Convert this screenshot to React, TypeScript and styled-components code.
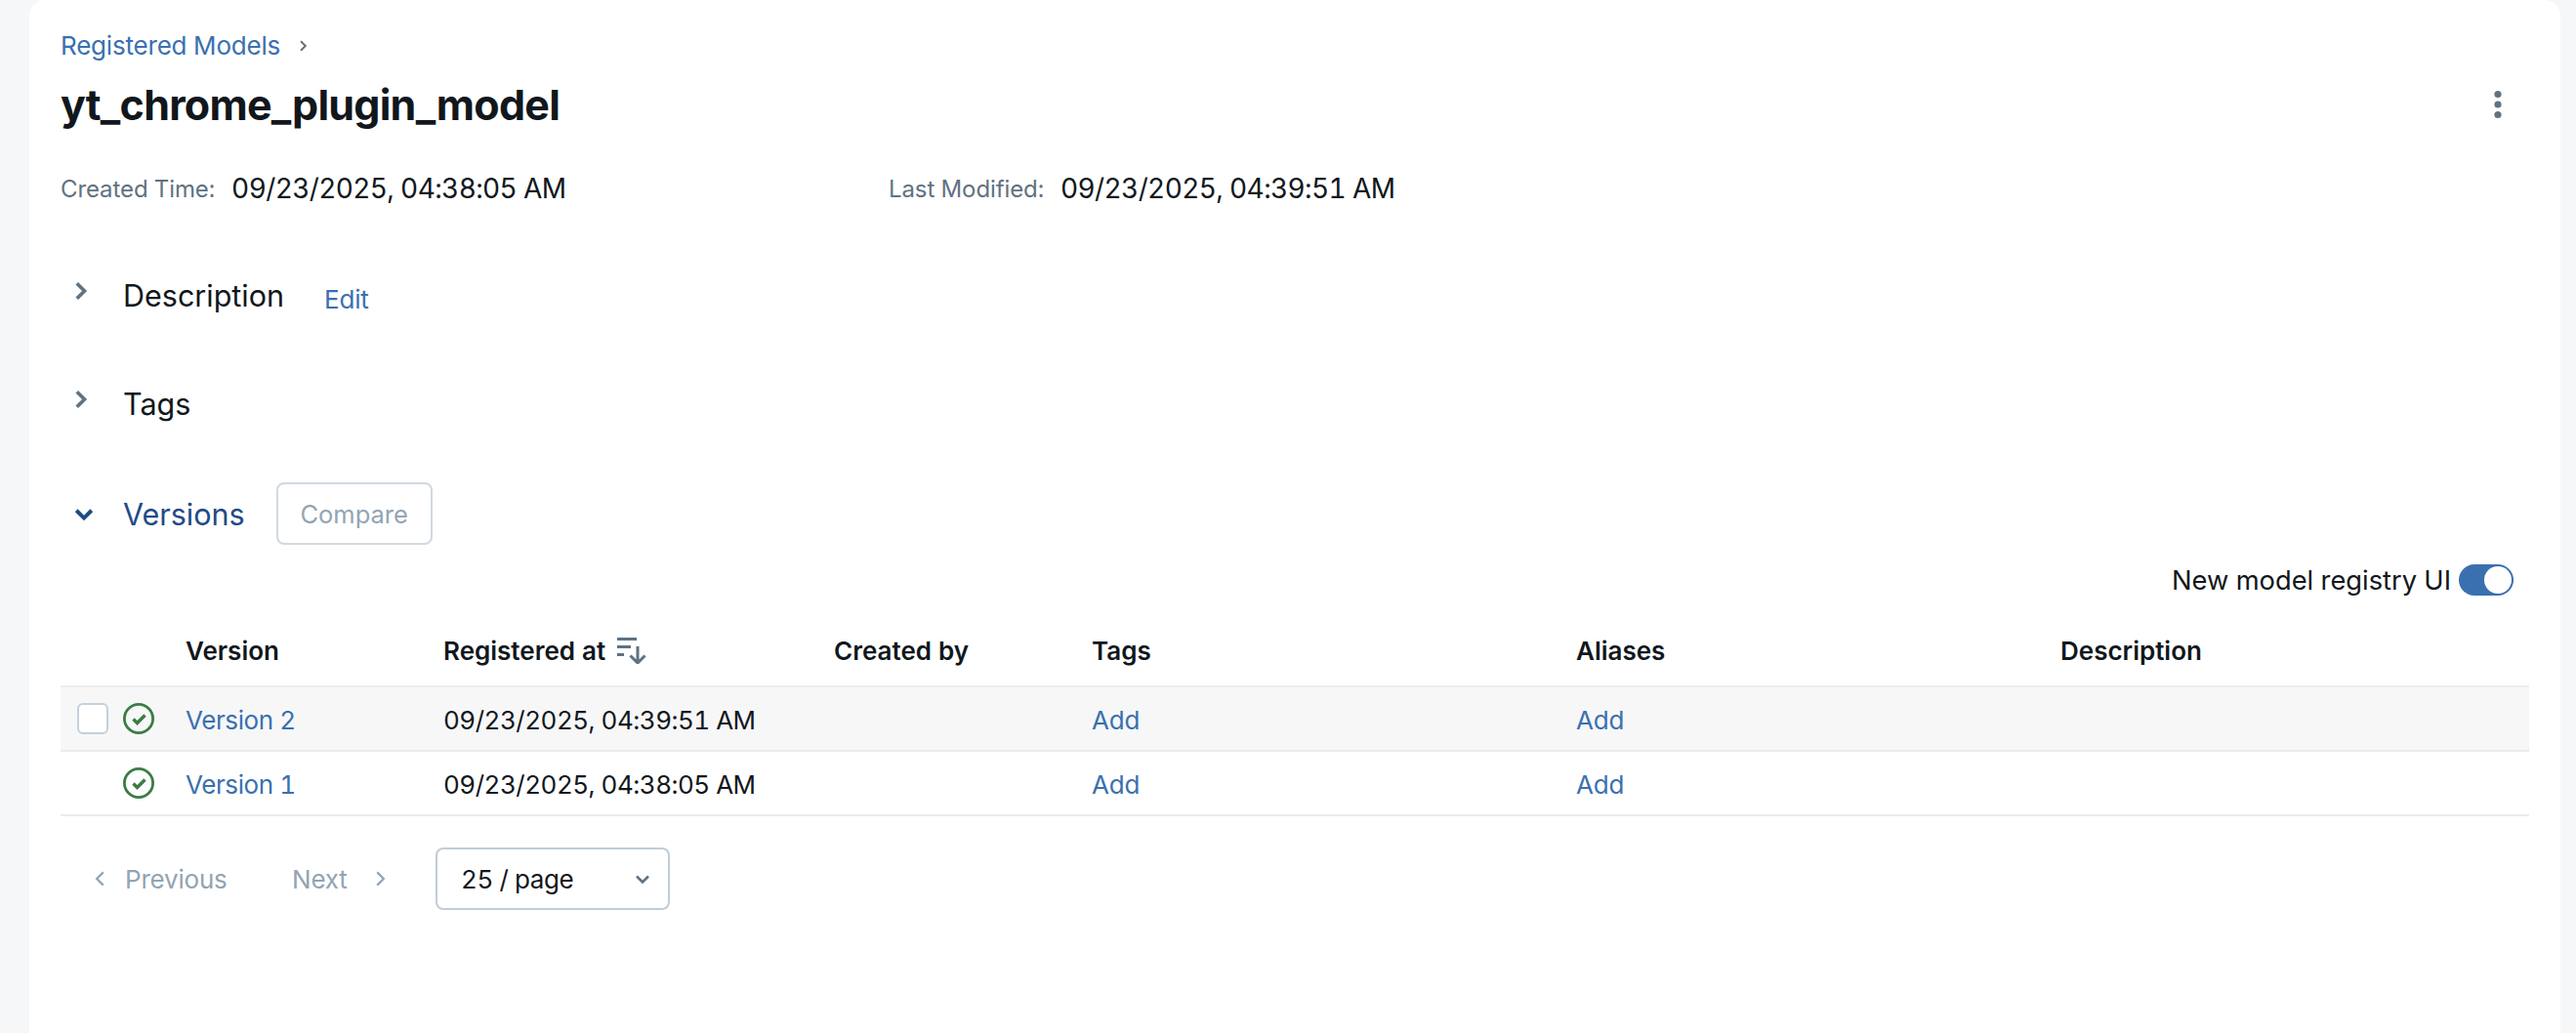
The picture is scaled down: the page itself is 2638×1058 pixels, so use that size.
import React from 'react';
import styled, { createGlobalStyle } from 'styled-components';

const Global = createGlobalStyle`
  html, body { margin: 0; padding: 0; background: #f6f7f9; }
  body { font-family: Inter, "Liberation Sans", sans-serif; color: #11171c; overflow: hidden; font-variant-numeric: tabular-nums; }
`;

const Page = styled.div`
  width: 2638px;
  height: 1058px;
  padding-left: 30px;
  box-sizing: border-box;
  overflow: hidden;
`;
const Card = styled.main`
  width: 2592px;
  height: 1058px;
  box-sizing: border-box;
  padding: 32px 32px 0;
  background: #fff;
  border-radius: 16px 16px 0 0;
`;
const Crumbs = styled.nav`
  display: flex;
  align-items: center;
  gap: 15px;
  height: 30px;
  color: #5f7281;
`;
const Link = styled.a`
  color: #3a70b0;
  font-size: 26px;
  line-height: 30px;
  letter-spacing: -0.2px;
  cursor: pointer;
`;
const TitleRow = styled.header`
  display: flex;
  align-items: center;
  justify-content: space-between;
  height: 56px;
  margin-top: 17px;
`;
const Title = styled.h1`
  margin: 0;
  font-size: 43px;
  line-height: 56px;
  font-weight: 700;
  letter-spacing: -0.75px;
  color: #11171c;
`;
const Kebab = styled.button`
  display: flex;
  width: 32px;
  height: 48px;
  margin-right: 16px;
  padding: 0;
  border: 0;
  background: none;
  align-items: center;
  justify-content: center;
  color: #5f7281;
`;
const Meta = styled.div`
  display: flex;
  height: 36px;
  margin-top: 40px;
`;
const MetaItem = styled.div`
  display: flex;
  align-items: center;
  gap: 17px;
  width: 848px;
`;
const MetaLabel = styled.span`
  font-size: 24px;
  letter-spacing: -0.1px;
  color: #5f7281;
`;
const MetaValue = styled.span`
  font-size: 28px;
  letter-spacing: -0.62px;
  color: #11171c;
`;
const Section = styled.section<{ $top: number }>`
  display: flex;
  align-items: center;
  height: 64px;
  margin-top: ${(p) => p.$top}px;
`;
const Caret = styled.span<{ $open?: boolean }>`
  display: flex;
  width: 64px;
  box-sizing: border-box;
  padding-left: ${(p) => (p.$open ? 11 : 7)}px;
  margin-bottom: ${(p) => (p.$open ? 0 : 10)}px;
  color: ${(p) => (p.$open ? '#1f4a85' : '#5f7281')};
`;
const SectionName = styled.h2<{ $open?: boolean }>`
  margin: 0;
  padding-top: ${(p) => (p.$open ? 2 : 0)}px;
  font-size: 30.5px;
  line-height: 40px;
  font-weight: 400;
  color: ${(p) => (p.$open ? '#1f4a85' : '#11171c')};
`;
const EditLink = styled(Link)`
  margin-left: 41px;
  margin-top: 8px;
`;
const CompareButton = styled.button`
  width: 160px;
  height: 64px;
  margin-left: 32px;
  box-sizing: border-box;
  border: 2px solid #d1d9e1;
  border-radius: 8px;
  background: #fff;
  color: #92a4b3;
  font: 400 25.5px Inter, sans-serif;
`;
const ToggleRow = styled.div`
  display: flex;
  align-items: center;
  justify-content: flex-end;
  gap: 8px;
  height: 32px;
  margin-top: 20px;
  padding-right: 16px;
  font-size: 27.3px;
`;
const Track = styled.span`
  display: flex;
  justify-content: flex-end;
  align-items: center;
  width: 56px;
  height: 32px;
  box-sizing: border-box;
  padding-right: 2px;
  border-radius: 16px;
  background: #3a70b0;
`;
const Knob = styled.span`
  width: 28px;
  height: 28px;
  border-radius: 50%;
  background: #fff;
`;
const grid = `
  display: grid;
  grid-template-columns: 128px 264px 400px 264px 496px 496px 480px;
  align-items: center;
  box-sizing: border-box;
  border-bottom: 2px solid #e8ecf0;
`;
const HeadRow = styled.div`
  ${grid}
  height: 74px;
  margin-top: 20px;
  font-size: 26px;
  font-weight: 600;
`;
const HeadCell = styled.div`
  display: flex;
  align-items: center;
  gap: 12px;
`;
const Row = styled.div<{ $hover?: boolean }>`
  ${grid}
  height: 66px;
  font-size: 26px;
  background: ${(p) => (p.$hover ? '#f7f7f8' : '#fff')};
`;
const CellLink = styled(Link)`
  margin-top: 3px;
`;
const VersionLink = styled(CellLink)`
  letter-spacing: -0.4px;
`;
const Time = styled.span`
  margin-top: 3px;
  letter-spacing: -0.5px;
`;
const StatusCell = styled.div`
  display: flex;
  align-items: center;
  gap: 15px;
  padding-left: 17px;
`;
const Checkbox = styled.span<{ $hidden?: boolean }>`
  width: 32px;
  height: 32px;
  box-sizing: border-box;
  border: 2px solid #c4d0dc;
  border-radius: 6px;
  background: #fff;
  visibility: ${(p) => (p.$hidden ? 'hidden' : 'visible')};
`;
const Pager = styled.div`
  display: flex;
  align-items: center;
  height: 64px;
  margin-top: 32px;
`;
const PageButton = styled.span<{ $width: number; $gap: number; $pad: number }>`
  display: flex;
  align-items: center;
  gap: ${(p) => p.$gap}px;
  width: ${(p) => p.$width}px;
  padding-left: ${(p) => p.$pad}px;
  box-sizing: border-box;
  font-size: 26px;
  letter-spacing: -0.2px;
  color: #92a4b3;
`;
const Select = styled.div`
  display: flex;
  align-items: center;
  justify-content: space-between;
  width: 240px;
  height: 64px;
  margin-left: 23px;
  padding: 0 16px 0 24px;
  box-sizing: border-box;
  border: 2px solid #c0cdd8;
  border-radius: 8px;
  font-size: 26px;
  letter-spacing: -0.4px;
  color: #11171c;
`;
const SelectArrow = styled.span`
  display: flex;
  color: #5f7281;
`;

const Chevron = ({ dir, size = 20, width = 2.6 }: { dir: 'r' | 'l' | 'd'; size?: number; width?: number }) => {
  const d = dir === 'r' ? 'M7.5 4l6 6-6 6' : dir === 'l' ? 'M12.5 4l-6 6 6 6' : 'M4 7.5l6 6 6-6';
  return (
    <svg width={size} height={size} viewBox="0 0 20 20" fill="none" stroke="currentColor" strokeWidth={width}>
      <path d={d} />
    </svg>
  );
};
const Dots = () => (
  <svg width="8" height="32" viewBox="0 0 8 32" fill="currentColor">
    <circle cx="4" cy="5.5" r="3.6" />
    <circle cx="4" cy="16" r="3.6" />
    <circle cx="4" cy="26.5" r="3.6" />
  </svg>
);
const SortIcon = () => (
  <svg width="30" height="27" viewBox="0 0 30 27" fill="none" stroke="#5f7281" strokeWidth="3">
    <path d="M0 1.5h20M0 9.5h14M0 17.5h7M21 9v17M13.5 18.5l7.5 7.5 7.5-7.5" />
  </svg>
);
const StatusIcon = () => (
  <svg width="32" height="32" viewBox="0 0 32 32" fill="none" stroke="#3a7d44" strokeWidth="2.8">
    <circle cx="16" cy="16" r="14.6" />
    <path d="M10.5 16.5l4 4 8-8" strokeWidth="3.4" />
  </svg>
);

const versions = [
  { name: 'Version 2', time: '09/23/2025, 04:39:51 AM', hover: true },
  { name: 'Version 1', time: '09/23/2025, 04:38:05 AM', hover: false },
];

export default function App() {
  return (
    <Page>
      <Global />
      <Card>
        <Crumbs>
          <Link>Registered Models</Link>
          <Chevron dir="r" size={16} width={2.4} />
        </Crumbs>
        <TitleRow>
          <Title>yt_chrome_plugin_model</Title>
          <Kebab aria-label="More"><Dots /></Kebab>
        </TitleRow>
        <Meta>
          <MetaItem>
            <MetaLabel>Created Time:</MetaLabel>
            <MetaValue>09/23/2025, 04:38:05 AM</MetaValue>
          </MetaItem>
          <MetaItem>
            <MetaLabel>Last Modified:</MetaLabel>
            <MetaValue>09/23/2025, 04:39:51 AM</MetaValue>
          </MetaItem>
        </Meta>
        <Section $top={60}>
          <Caret><Chevron dir="r" size={26} width={2.8} /></Caret>
          <SectionName>Description</SectionName>
          <EditLink>Edit</EditLink>
        </Section>
        <Section $top={47}>
          <Caret><Chevron dir="r" size={26} width={2.8} /></Caret>
          <SectionName>Tags</SectionName>
        </Section>
        <Section $top={48}>
          <Caret $open><Chevron dir="d" size={26} width={3} /></Caret>
          <SectionName $open>Versions</SectionName>
          <CompareButton disabled>Compare</CompareButton>
        </Section>
        <ToggleRow>
          <span>New model registry UI</span>
          <Track><Knob /></Track>
        </ToggleRow>
        <HeadRow>
          <HeadCell />
          <HeadCell>Version</HeadCell>
          <HeadCell>Registered at <SortIcon /></HeadCell>
          <HeadCell>Created by</HeadCell>
          <HeadCell>Tags</HeadCell>
          <HeadCell>Aliases</HeadCell>
          <HeadCell>Description</HeadCell>
        </HeadRow>
        {versions.map((v) => (
          <Row key={v.name} $hover={v.hover}>
            <StatusCell>
              <Checkbox $hidden={!v.hover} />
              <StatusIcon />
            </StatusCell>
            <VersionLink>{v.name}</VersionLink>
            <Time>{v.time}</Time>
            <span />
            <CellLink>Add</CellLink>
            <CellLink>Add</CellLink>
            <span />
          </Row>
        ))}
        <Pager>
          <PageButton $width={205} $gap={14} $pad={30}>
            <Chevron dir="l" size={22} width={2} />
            Previous
          </PageButton>
          <PageButton $width={156} $gap={22} $pad={32}>
            Next
            <Chevron dir="r" size={22} width={2} />
          </PageButton>
          <Select>
            25 / page
            <SelectArrow><Chevron dir="d" size={20} width={2.6} /></SelectArrow>
          </Select>
        </Pager>
      </Card>
    </Page>
  );
}
